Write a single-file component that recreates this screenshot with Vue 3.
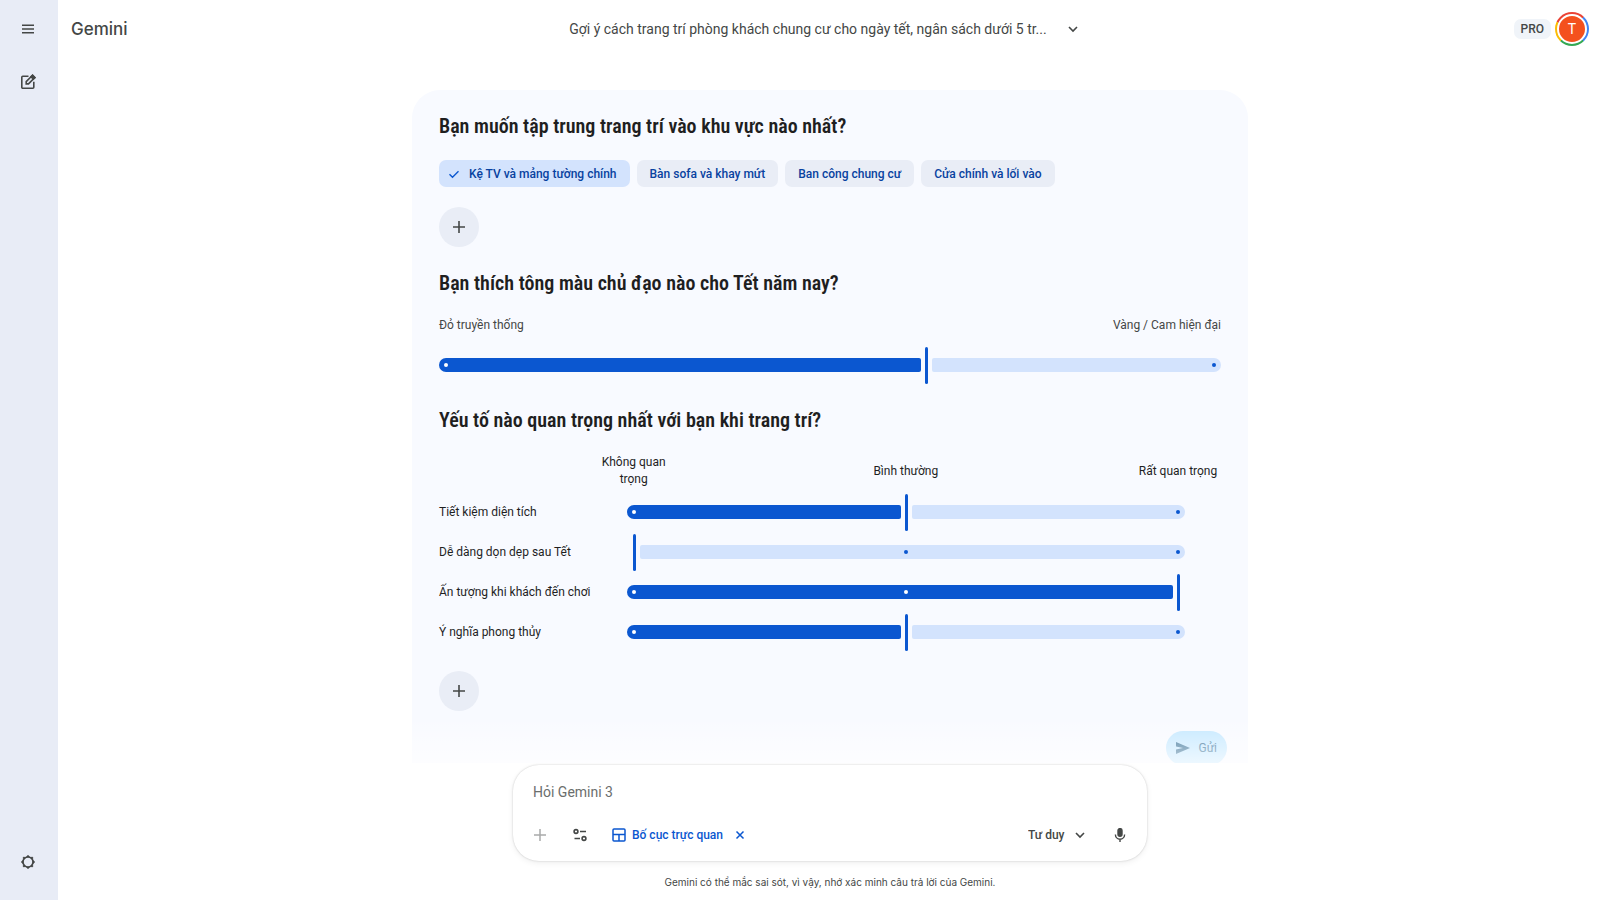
<script setup>
    import { ref } from "vue";

    const chips = ref([
        { text: "Kệ TV và mảng tường chính", selected: true },
        { text: "Bàn sofa và khay mứt", selected: false },
        { text: "Ban công chung cư", selected: false },
        { text: "Cửa chính và lối vào", selected: false },
    ]);

    const tone = ref(62.5);
    const scale = ["Không quan trọng", "Bình thường", "Rất quan trọng"];
    const factors = ref([
        { text: "Tiết kiệm diện tích", value: 50 },
        { text: "Dễ dàng dọn dẹp sau Tết", value: 0 },
        { text: "Ấn tượng khi khách đến chơi", value: 100 },
        { text: "Ý nghĩa phong thủy", value: 50 },
    ]);

    const prompt = ref("");
    const mode = ref("Tư duy");
    const layout_on = ref(true);

    // the handle travels between the centres of the two round ends
    function fill_width(value) {
        return { width: `calc((100% - 14px) * ${value / 100} + 2px)` };
    }
</script>

<template>
    <div class="app">
        <nav class="sidebar">
            <button class="icon_btn" aria-label="Menu">
                <svg width="20" height="20" viewBox="0 0 20 20" fill="none" stroke="currentColor" stroke-width="1.5">
                    <path d="M4 6.2h12M4 10h12M4 13.8h12" />
                </svg>
            </button>
            <button class="icon_btn" aria-label="Chat">
                <svg width="20" height="20" viewBox="0 0 20 20" fill="none" stroke="currentColor" stroke-width="1.6">
                    <path d="M10.5 4.2H4.8a1 1 0 0 0-1 1v10a1 1 0 0 0 1 1h10a1 1 0 0 0 1-1V9.8" />
                    <path d="M8.2 11.9v-2.3l6.3-6.3 2.3 2.3-6.3 6.3z" />
                    <path d="M13 4.8l2.3 2.3 1.6-1.5-2.3-2.4z" fill="currentColor" />
                </svg>
            </button>
            <button class="icon_btn settings" aria-label="Settings">
                <svg width="20" height="20" viewBox="0 0 20 20" fill="none" stroke="currentColor">
                    <circle cx="10" cy="10" r="5" stroke-width="1.6" />
                    <path
                        d="M10 3l1.7 2h-3.4zM10 17l1.7-2h-3.4zM3 10l2-1.7v3.4zM17 10l-2-1.7v3.4zM5.1 5.1l2.5.2-2.3 2.3zM14.9 5.1l-2.5.2 2.3 2.3zM5.1 14.9l2.5-.2-2.3-2.3zM14.9 14.9l-2.5-.2 2.3-2.3z"
                        fill="currentColor"
                        stroke-width=".4"
                    />
                </svg>
            </button>
        </nav>

        <div class="page">
            <header class="topbar">
                <a class="brand" href="#">Gemini</a>
                <button class="title">
                    <span>Gợi ý cách trang trí phòng khách chung cư cho ngày tết, ngân sách dưới 5 tr...</span>
                    <svg width="12" height="12" viewBox="0 0 12 12" fill="none" stroke="currentColor" stroke-width="1.6">
                        <path d="M2 4l4 4 4-4" />
                    </svg>
                </button>
                <div class="account">
                    <span class="badge">PRO</span>
                    <button class="avatar"><span>T</span></button>
                </div>
            </header>

            <main class="chat">
                <section class="card">
                    <h2>Bạn muốn tập trung trang trí vào khu vực nào nhất?</h2>
                    <div class="chips">
                        <button
                            v-for="chip in chips"
                            :key="chip.text"
                            class="chip"
                            :class="{ selected: chip.selected }"
                            :aria-pressed="chip.selected"
                            @click="chip.selected = !chip.selected"
                        >
                            <svg
                                v-if="chip.selected"
                                width="12"
                                height="12"
                                viewBox="0 0 12 12"
                                fill="none"
                                stroke="currentColor"
                                stroke-width="1.4"
                            >
                                <path d="M1.5 6.2l3 3 6-6" />
                            </svg>
                            {{ chip.text }}
                        </button>
                    </div>
                    <button class="add" aria-label="+">
                        <svg width="14" height="14" viewBox="0 0 14 14" fill="none" stroke="currentColor" stroke-width="1.6">
                            <path d="M7 1v12M1 7h12" />
                        </svg>
                    </button>

                    <h2 id="tone">Bạn thích tông màu chủ đạo nào cho Tết năm nay?</h2>
                    <div class="ends">
                        <span>Đỏ truyền thống</span>
                        <span>Vàng / Cam hiện đại</span>
                    </div>
                    <div class="slider wide">
                        <div class="fill" :style="fill_width(tone)"></div>
                        <div class="handle"></div>
                        <div class="rest"></div>
                        <div class="dots">
                            <i class="on"></i>
                            <i></i>
                        </div>
                        <input v-model.number="tone" type="range" min="0" max="100" step="any" aria-labelledby="tone" />
                    </div>

                    <h2>Yếu tố nào quan trọng nhất với bạn khi trang trí?</h2>
                    <div class="scale">
                        <span v-for="step in scale" :key="step">{{ step }}</span>
                    </div>
                    <div v-for="(factor, index) in factors" :key="factor.text" class="factor">
                        <label :for="'factor' + index">{{ factor.text }}</label>
                        <div class="slider">
                            <div class="fill" :class="{ empty: factor.value == 0 }" :style="fill_width(factor.value)"></div>
                            <div class="handle"></div>
                            <div class="rest" :class="{ empty: factor.value == 100 }"></div>
                            <div class="dots">
                                <i
                                    v-for="stop in [0, 50, 100]"
                                    :key="stop"
                                    :class="{ on: stop < factor.value, empty: stop == factor.value }"
                                ></i>
                            </div>
                            <input
                                :id="'factor' + index"
                                v-model.number="factor.value"
                                type="range"
                                min="0"
                                max="100"
                                step="50"
                            />
                        </div>
                    </div>
                    <button class="add" aria-label="+">
                        <svg width="14" height="14" viewBox="0 0 14 14" fill="none" stroke="currentColor" stroke-width="1.6">
                            <path d="M7 1v12M1 7h12" />
                        </svg>
                    </button>

                    <button class="send">
                        <svg width="14" height="12" viewBox="0 0 14 12" fill="currentColor">
                            <path d="M0 0l14 6-14 6V7.4L7 6 0 4.6z" />
                        </svg>
                        Gửi
                    </button>
                </section>
            </main>

            <footer class="bottom">
                <form class="composer" @submit.prevent>
                    <input v-model="prompt" class="prompt" type="text" placeholder="Hỏi Gemini 3" aria-label="Hỏi Gemini 3" />
                    <div class="tools">
                        <button type="button" class="tool faint" aria-label="+">
                            <svg width="14" height="14" viewBox="0 0 14 14" fill="none" stroke="currentColor" stroke-width="1.5">
                                <path d="M7 1v12M1 7h12" />
                            </svg>
                        </button>
                        <button type="button" class="tool" aria-label="Tools">
                            <svg width="14" height="14" viewBox="0 0 14 14" fill="none" stroke="currentColor" stroke-width="1.6">
                                <circle cx="3" cy="3.5" r="1.9" />
                                <path d="M7 3.5h6M1.5 10.5H7" />
                                <circle cx="11" cy="10.5" r="1.9" />
                            </svg>
                        </button>
                        <button v-if="layout_on" type="button" class="layout" @click="layout_on = false">
                            <svg width="14" height="14" viewBox="0 0 14 14" fill="none" stroke="currentColor" stroke-width="1.5">
                                <rect x="1" y="1" width="12" height="12" rx="1" />
                                <path d="M1 6.5h12M7 6.5V13" />
                            </svg>
                            <span>Bố cục trực quan</span>
                            <svg width="10" height="10" viewBox="0 0 10 10" fill="none" stroke="currentColor" stroke-width="1.5">
                                <path d="M1.5 1.5l7 7M8.5 1.5l-7 7" />
                            </svg>
                        </button>
                        <div class="mode">
                            <select v-model="mode" aria-label="Tư duy">
                                <option>Tư duy</option>
                            </select>
                            <svg width="12" height="12" viewBox="0 0 12 12" fill="none" stroke="currentColor" stroke-width="1.6">
                                <path d="M2 4l4 4 4-4" />
                            </svg>
                        </div>
                        <button type="button" class="tool" aria-label="Mic">
                            <svg width="12" height="14" viewBox="0 0 12 14" fill="none" stroke="currentColor" stroke-width="1.4">
                                <rect x="4" y=".6" width="4" height="7.6" rx="2" fill="currentColor" />
                                <path d="M1.4 6.6a4.6 4.6 0 0 0 9.2 0M6 11v3" />
                            </svg>
                        </button>
                    </div>
                </form>
                <p class="note">Gemini có thể mắc sai sót, vì vậy, nhớ xác minh câu trả lời của Gemini.</p>
            </footer>
        </div>
    </div>
</template>

<style>
body {
    margin: 0;
    background-color: #fff;
}
</style>

<style scoped>
.app {
    display: flex;
    height: 100vh;
    font-family: Roboto, "Noto Sans", sans-serif;
    font-size: 12px;
    color: #1f1f1f;
    background-color: #fff;
}
button,
input,
select {
    font: inherit;
    color: inherit;
    border: 0;
    padding: 0;
    margin: 0;
    background: none;
}
button {
    cursor: pointer;
}
svg {
    display: block;
    flex: none;
}
.sidebar {
    flex: none;
    box-sizing: border-box;
    width: 58px;
    padding: 9px 9px 18px;
    display: flex;
    flex-direction: column;
    gap: 13px;
    background-color: #e8ecf6;
    color: #444746;
}
.icon_btn {
    width: 38px;
    height: 40px;
    display: grid;
    place-items: center;
}
.settings {
    margin-top: auto;
}
.page {
    flex: 1;
    min-width: 0;
    display: flex;
    flex-direction: column;
}
.topbar {
    flex: none;
    height: 58px;
    padding: 0 11px 0 13px;
    display: grid;
    grid-template-columns: 1fr auto 1fr;
    align-items: center;
    color: #444746;
}
.brand {
    font-family: Inter, sans-serif;
    font-size: 17px;
    font-weight: 500;
    color: inherit;
    text-decoration: none;
}
.title {
    display: flex;
    align-items: center;
    gap: 20px;
    margin-right: 12px;
    font-size: 14px;
}
.account {
    display: flex;
    align-items: center;
    justify-content: flex-end;
    gap: 4px;
}
.badge {
    padding: 0 7px;
    line-height: 20px;
    border-radius: 7px;
    background-color: #f0f4f9;
    font-weight: 500;
}
.avatar {
    width: 34px;
    height: 34px;
    padding: 2px;
    border-radius: 50%;
    background: conic-gradient(#ea4335 0 12%, #4285f4 12% 38%, #34a853 38% 62%, #fbbc04 62% 82%, #ea4335 82%);
}
.avatar span {
    display: block;
    border: 2px solid #fff;
    border-radius: 50%;
    background-color: #f4511e;
    color: #fff;
    font-size: 14px;
    line-height: 26px;
}
.chat {
    flex: 1;
    min-height: 0;
    overflow: hidden;
    position: relative;
    padding: 32px 24px 0 26px;
}
.chat::after {
    content: "";
    position: absolute;
    inset: auto 0 0;
    height: 46px;
    background: linear-gradient(#fff0, #ffffffb3);
    pointer-events: none;
}
.card {
    box-sizing: border-box;
    max-width: 836px;
    margin: 0 auto;
    padding: 22px 27px 27px;
    border-radius: 28px;
    background-color: #f8faff;
}
h2 {
    margin: 0;
    font-family: "Roboto Condensed", Roboto, sans-serif;
    font-size: 20px;
    font-weight: 600;
    line-height: 28px;
}
.chips {
    display: flex;
    flex-wrap: wrap;
    gap: 7px;
    margin: 20px 0;
}
.chip {
    display: flex;
    align-items: center;
    gap: 9px;
    height: 27px;
    padding: 0 13px;
    border-radius: 7px;
    background-color: #e9edf6;
    color: #0842a0;
    font-weight: 500;
}
.chip.selected {
    padding-left: 9px;
    background-color: #d3e3fd;
}
.chip svg {
    color: #0b57d0;
}
.add {
    width: 40px;
    height: 40px;
    border-radius: 50%;
    display: grid;
    place-items: center;
    background-color: #e9edf6;
    color: #444746;
}
.add + h2 {
    margin-top: 22px;
}
.ends {
    display: flex;
    justify-content: space-between;
    margin-top: 20px;
    line-height: 17px;
    color: #444746;
}
.slider {
    position: relative;
    display: flex;
    align-items: center;
    gap: 4px;
    height: 40px;
}
.wide {
    margin: 11px 0 21px;
}
.fill,
.rest {
    height: 14px;
}
.fill {
    flex: none;
    border-radius: 7px 2px 2px 7px;
    background-color: #0b57d0;
}
.rest {
    flex: 1;
    border-radius: 2px 7px 7px 2px;
    background-color: #d3e3fd;
}
.handle {
    flex: none;
    width: 3px;
    height: 37px;
    border-radius: 2px;
    background-color: #0b57d0;
}
.dots {
    position: absolute;
    inset: 0 5px;
    display: flex;
    align-items: center;
    justify-content: space-between;
}
.dots i {
    width: 4px;
    height: 4px;
    border-radius: 50%;
    background-color: #0b57d0;
}
.dots .on {
    background-color: #fff;
}
.empty {
    visibility: hidden;
}
.slider input {
    position: absolute;
    inset: 0;
    width: 100%;
    opacity: 0;
    cursor: pointer;
}
.scale {
    display: flex;
    justify-content: space-between;
    align-items: center;
    margin: 20px 0 4px calc(24% - 36px);
}
.scale span {
    width: 86px;
    line-height: 17px;
    text-align: center;
}
.factor {
    display: grid;
    grid-template-columns: 24% 1fr;
    align-items: center;
}
.factor .slider {
    margin-right: 36px;
}
.factor + .add {
    margin-top: 19px;
}
.send {
    display: flex;
    align-items: center;
    gap: 8px;
    height: 34px;
    margin: 20px -6px 0 auto;
    padding: 0 10px;
    border-radius: 17px;
    background-color: #c2e7ff;
    color: #2f6a92;
}
.bottom {
    flex: none;
    padding: 2px 24px 9px 26px;
}
.composer {
    box-sizing: border-box;
    max-width: 634px;
    height: 96px;
    margin: 0 auto;
    padding: 16px 13px 12px 20px;
    display: flex;
    flex-direction: column;
    justify-content: space-between;
    border-radius: 26px;
    background-color: #fff;
    box-shadow: 0 0 2px #0003, 0 2px 6px #0001;
    color: #444746;
}
.prompt {
    outline: 0;
    font-size: 14px;
    line-height: 22px;
}
.prompt::placeholder {
    color: #6b6e6d;
    opacity: 1;
}
.tools {
    display: flex;
    align-items: center;
    height: 28px;
}
.tool {
    display: grid;
    place-items: center;
    width: 28px;
    height: 28px;
}
.faint {
    margin: 0 12px 0 -7px;
    color: #a9abab;
}
.layout {
    display: flex;
    align-items: center;
    gap: 6px;
    margin-left: 18px;
    color: #0b57d0;
    font-weight: 500;
}
.layout span {
    margin-right: 6px;
}
.mode {
    display: flex;
    align-items: center;
    gap: 9px;
    margin: 0 20px 0 auto;
}
.mode select {
    appearance: none;
    font-weight: 500;
}
.note {
    margin: 12px 0 0;
    text-align: center;
    font-family: Inter, sans-serif;
    font-size: 10px;
    line-height: 18px;
    color: #444746;
}
</style>
